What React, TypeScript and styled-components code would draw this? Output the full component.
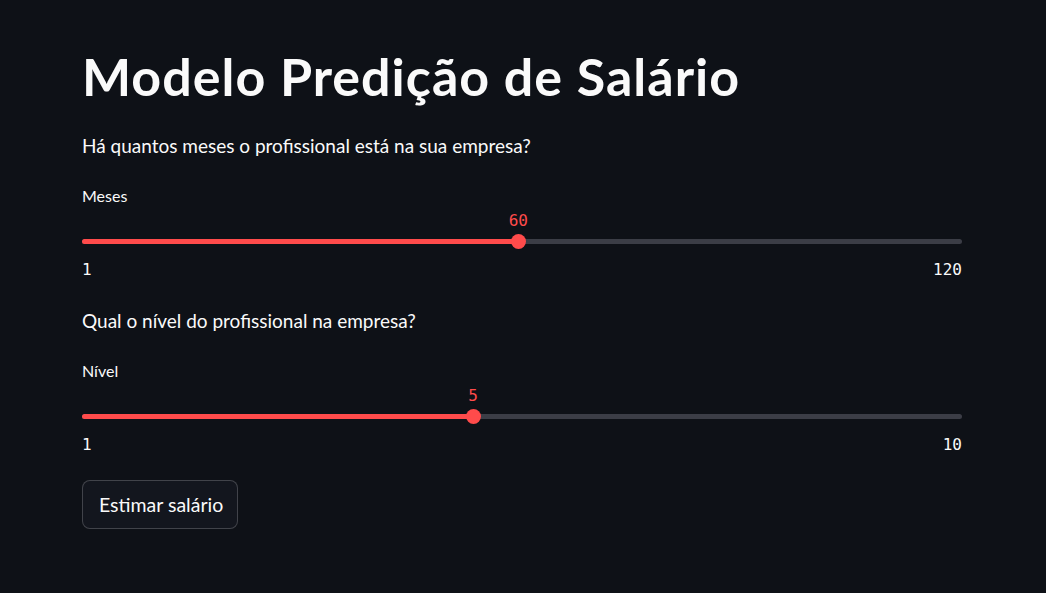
import React from "react";
import styled, { createGlobalStyle } from "styled-components";

const Global = createGlobalStyle`
  html, body { margin: 0; padding: 0; background: #0e1117; }
  body { font-family: "Lato", "Noto Sans", sans-serif; color: #fafafa; }
`;

const Page = styled.main`
  width: 1046px;
  height: 593px;
  background: #0e1117;
  box-sizing: border-box;
  padding: 44px 84px 0 82px;
  display: flex;
  flex-direction: column;
`;

const Title = styled.h1`
  margin: 0;
  font-size: 52px;
  line-height: 64px;
  font-weight: 700;
  letter-spacing: 1px;
  color: #fafafa;
`;

const Question = styled.p`
  margin: 0;
  font-size: 19px;
  line-height: 28px;
  color: #fafafa;
`;

const Block = styled.section<{ $top: number }>`
  margin-top: ${(p) => p.$top}px;
  display: flex;
  flex-direction: column;
`;

const Label = styled.div`
  margin-top: 26px;
  font-size: 16px;
  line-height: 20px;
  color: #fafafa;
`;

const SliderArea = styled.div`
  position: relative;
  margin-top: 3px;
  height: 40px;
`;

const Track = styled.div`
  position: absolute;
  left: 0;
  right: 0;
  top: 30px;
  height: 5px;
  border-radius: 3px;
  background: #3b3d46;
`;

const Fill = styled.div`
  position: absolute;
  left: 0;
  top: 0;
  bottom: 0;
  border-radius: 3px;
  background: #ff4b4b;
`;

const Thumb = styled.div`
  position: absolute;
  top: 25px;
  width: 15px;
  height: 15px;
  margin-left: -7.5px;
  border-radius: 50%;
  background: #ff4b4b;
`;

const Value = styled.div`
  position: absolute;
  top: 2px;
  transform: translateX(-50%);
  font-family: "DejaVu Sans Mono", "Liberation Mono", monospace;
  font-size: 16px;
  line-height: 20px;
  color: #ff4b4b;
`;

const Ticks = styled.div`
  display: flex;
  justify-content: space-between;
  margin-top: 11px;
  font-family: "DejaVu Sans Mono", "Liberation Mono", monospace;
  font-size: 16px;
  line-height: 20px;
  color: #fafafa;
`;

const Button = styled.button`
  align-self: flex-start;
  margin-top: 25px;
  height: 49px;
  padding: 0 14px 0 16px;
  border-radius: 8px;
  border: 1px solid rgba(250, 250, 250, 0.2);
  background: #13161e;
  color: #fafafa;
  font-family: "Lato", "Noto Sans", sans-serif;
  font-size: 19.5px;
  cursor: pointer;
`;

type SliderProps = { label: string; min: number; max: number; value: number };

function Slider({ label, min, max, value }: SliderProps) {
  const pct = ((value - min) / (max - min)) * 100;
  return (
    <>
      <Label>{label}</Label>
      <SliderArea>
        <Track>
          <Fill style={{ width: `${pct}%` }} />
        </Track>
        <Thumb style={{ left: `${pct}%` }} />
        <Value style={{ left: `${pct}%` }}>{value}</Value>
      </SliderArea>
      <Ticks>
        <span>{min}</span>
        <span>{max}</span>
      </Ticks>
    </>
  );
}

export default function App() {
  return (
    <>
      <Global />
      <Page>
        <Title>Modelo Predição de Salário</Title>
        <Block $top={24}>
          <Question>Há quantos meses o profissional está na sua empresa?</Question>
          <Slider label="Meses" min={1} max={120} value={60} />
        </Block>
        <Block $top={27}>
          <Question>Qual o nível do profissional na empresa?</Question>
          <Slider label="Nível" min={1} max={10} value={5} />
        </Block>
        <Button>Estimar salário</Button>
      </Page>
    </>
  );
}
